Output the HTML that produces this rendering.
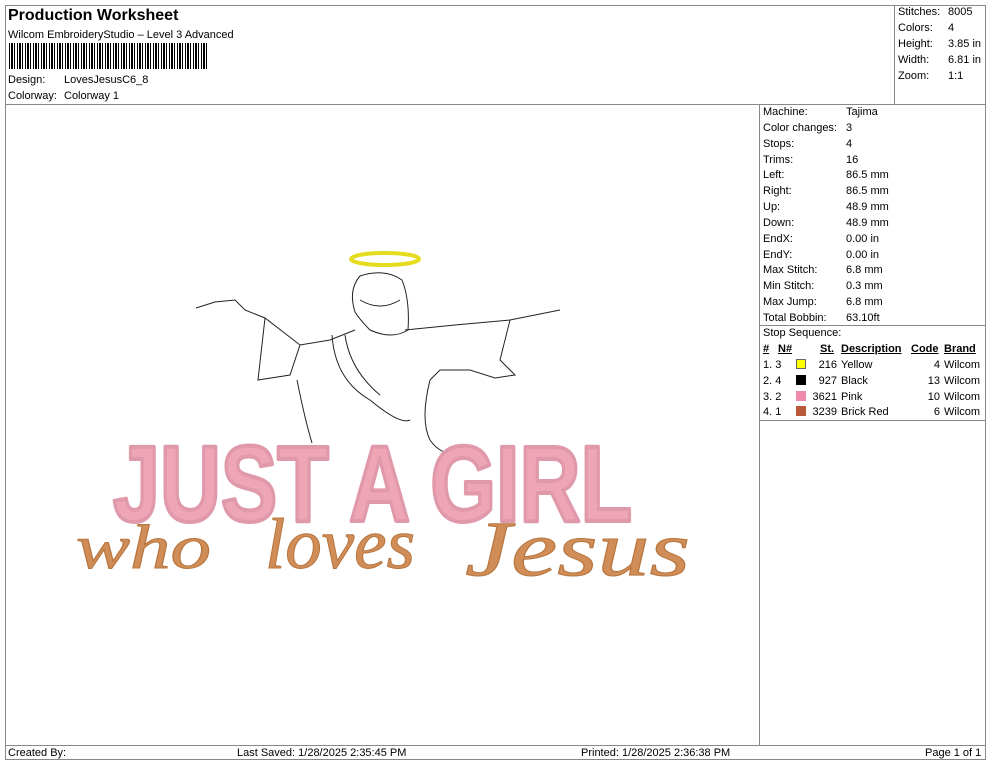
<!DOCTYPE html>
<html><head><meta charset="utf-8"><style>
*{margin:0;padding:0;box-sizing:border-box}
body{width:990px;height:762px;background:#fff;font-family:"Liberation Sans",Arial,sans-serif;font-size:11px;color:#000;position:relative;overflow:hidden}
.a{position:absolute;white-space:nowrap;line-height:13px;margin-top:1px}
.l{position:absolute;background:#888}
.bar{position:absolute;left:9px;top:43px;width:199px;height:26px;background:repeating-linear-gradient(90deg,#000 0 1px,#fff 1px 2px,#000 2px 4px,#fff 4px 5px,#000 5px 6px,#fff 6px 8px)}
</style></head><body>
<div class="l" style="left:5px;top:5px;width:980px;height:1px"></div>
<div class="l" style="left:5px;top:5px;width:1px;height:755px"></div>
<div class="l" style="left:985px;top:5px;width:1px;height:755px"></div>
<div class="l" style="left:5px;top:104px;width:980px;height:1px"></div>
<div class="l" style="left:894px;top:5px;width:1px;height:99px"></div>
<div class="l" style="left:759px;top:104px;width:1px;height:641px"></div>
<div class="l" style="left:759px;top:325px;width:226px;height:1px"></div>
<div class="l" style="left:759px;top:420px;width:226px;height:1px"></div>
<div class="l" style="left:5px;top:745px;width:980px;height:1px"></div>
<div class="l" style="left:5px;top:759px;width:980px;height:1px"></div>

<div class="a" style="left:8px;top:6px;font-size:16px;font-weight:bold;line-height:18px">Production Worksheet</div>
<div class="a" style="left:8px;top:28px">Wilcom EmbroideryStudio – Level 3 Advanced</div>
<div class="bar"></div>
<div class="a" style="left:8px;top:73px">Design:</div><div class="a" style="left:64px;top:73px">LovesJesusC6_8</div>
<div class="a" style="left:8px;top:89px">Colorway:</div><div class="a" style="left:64px;top:89px">Colorway 1</div>

<div class="a" style="left:898px;top:5px">Stitches:</div><div class="a" style="left:948px;top:5px">8005</div>
<div class="a" style="left:898px;top:21px">Colors:</div><div class="a" style="left:948px;top:21px">4</div>
<div class="a" style="left:898px;top:37px">Height:</div><div class="a" style="left:948px;top:37px">3.85 in</div>
<div class="a" style="left:898px;top:53px">Width:</div><div class="a" style="left:948px;top:53px">6.81 in</div>
<div class="a" style="left:898px;top:69px">Zoom:</div><div class="a" style="left:948px;top:69px">1:1</div>

<div class="a" style="left:763px;top:105px">Machine:</div><div class="a" style="left:846px;top:105px">Tajima</div>
<div class="a" style="left:763px;top:121px">Color changes:</div><div class="a" style="left:846px;top:121px">3</div>
<div class="a" style="left:763px;top:137px">Stops:</div><div class="a" style="left:846px;top:137px">4</div>
<div class="a" style="left:763px;top:153px">Trims:</div><div class="a" style="left:846px;top:153px">16</div>
<div class="a" style="left:763px;top:168px">Left:</div><div class="a" style="left:846px;top:168px">86.5 mm</div>
<div class="a" style="left:763px;top:184px">Right:</div><div class="a" style="left:846px;top:184px">86.5 mm</div>
<div class="a" style="left:763px;top:200px">Up:</div><div class="a" style="left:846px;top:200px">48.9 mm</div>
<div class="a" style="left:763px;top:216px">Down:</div><div class="a" style="left:846px;top:216px">48.9 mm</div>
<div class="a" style="left:763px;top:232px">EndX:</div><div class="a" style="left:846px;top:232px">0.00 in</div>
<div class="a" style="left:763px;top:248px">EndY:</div><div class="a" style="left:846px;top:248px">0.00 in</div>
<div class="a" style="left:763px;top:263px">Max Stitch:</div><div class="a" style="left:846px;top:263px">6.8 mm</div>
<div class="a" style="left:763px;top:279px">Min Stitch:</div><div class="a" style="left:846px;top:279px">0.3 mm</div>
<div class="a" style="left:763px;top:295px">Max Jump:</div><div class="a" style="left:846px;top:295px">6.8 mm</div>
<div class="a" style="left:763px;top:311px">Total Bobbin:</div><div class="a" style="left:846px;top:311px">63.10ft</div>
<div class="a" style="left:763px;top:326px">Stop Sequence:</div>
<div class="a" style="left:763px;top:342px;font-weight:bold;text-decoration:underline">#</div>
<div class="a" style="left:778px;top:342px;font-weight:bold;text-decoration:underline">N#</div>
<div class="a" style="left:820px;top:342px;font-weight:bold;text-decoration:underline">St.</div>
<div class="a" style="left:841px;top:342px;font-weight:bold;text-decoration:underline">Description</div>
<div class="a" style="left:911px;top:342px;font-weight:bold;text-decoration:underline">Code</div>
<div class="a" style="left:944px;top:342px;font-weight:bold;text-decoration:underline">Brand</div>

<div class="a" style="left:763px;top:358px">1. 3</div><div style="position:absolute;left:796px;top:359px;width:10px;height:10px;background:#ffff00;border:1px solid #666"></div><div class="a" style="left:808px;top:358px;width:29px;text-align:right">216</div><div class="a" style="left:841px;top:358px">Yellow</div><div class="a" style="left:911px;top:358px;width:29px;text-align:right">4</div><div class="a" style="left:944px;top:358px">Wilcom</div>
<div class="a" style="left:763px;top:374px">2. 4</div><div style="position:absolute;left:796px;top:375px;width:10px;height:10px;background:#000"></div><div class="a" style="left:808px;top:374px;width:29px;text-align:right">927</div><div class="a" style="left:841px;top:374px">Black</div><div class="a" style="left:911px;top:374px;width:29px;text-align:right">13</div><div class="a" style="left:944px;top:374px">Wilcom</div>
<div class="a" style="left:763px;top:390px">3. 2</div><div style="position:absolute;left:796px;top:391px;width:10px;height:10px;background:#f08cab"></div><div class="a" style="left:808px;top:390px;width:29px;text-align:right">3621</div><div class="a" style="left:841px;top:390px">Pink</div><div class="a" style="left:911px;top:390px;width:29px;text-align:right">10</div><div class="a" style="left:944px;top:390px">Wilcom</div>
<div class="a" style="left:763px;top:405px">4. 1</div><div style="position:absolute;left:796px;top:406px;width:10px;height:10px;background:#b9593a"></div><div class="a" style="left:808px;top:405px;width:29px;text-align:right">3239</div><div class="a" style="left:841px;top:405px">Brick Red</div><div class="a" style="left:911px;top:405px;width:29px;text-align:right">6</div><div class="a" style="left:944px;top:405px">Wilcom</div>

<div class="a" style="left:8px;top:746px">Created By:</div>
<div class="a" style="left:237px;top:746px">Last Saved: 1/28/2025 2:35:45 PM</div>
<div class="a" style="left:581px;top:746px">Printed: 1/28/2025 2:36:38 PM</div>
<div class="a" style="left:925px;top:746px">Page 1 of 1</div>

<svg style="position:absolute;left:0;top:0" width="990" height="762">
<ellipse cx="385" cy="259" rx="34" ry="6" fill="none" stroke="#e6dc1e" stroke-width="4"/>
<g fill="none" stroke="#222" stroke-width="1">
<path d="M355 312 Q348 290 360 276 Q385 268 402 280 Q410 300 408 330 Q392 340 370 330 Q360 320 355 312"/>
<path d="M360 300 Q380 312 400 300"/>
<path d="M196 308 L215 302 L235 300 L245 310 L265 318 L300 345 L330 340 L355 330"/>
<path d="M265 318 L258 380 L290 375 L300 345"/>
<path d="M405 330 L455 325 L510 320 L535 315 L560 310"/>
<path d="M510 320 L500 360 L515 375 L495 378 L470 370 L440 370 L430 380"/>
<path d="M332 335 Q335 380 370 400 Q400 425 410 420"/>
<path d="M345 335 Q350 370 380 395"/>
<path d="M430 380 Q420 420 430 440 Q440 455 460 455"/>
<path d="M297 380 Q305 420 312 443"/>
</g>
<text x="113" y="521" font-family="Liberation Sans" font-weight="bold" font-size="108" fill="#eea5b5" stroke="#e099aa" stroke-width="4" stroke-linejoin="round" textLength="519" lengthAdjust="spacingAndGlyphs">JUST A GIRL</text>
<g font-family="Liberation Serif" font-style="italic" fill="#d08d57" stroke="#b8763f" stroke-width="1">
<text x="76" y="568" font-size="62" textLength="135" lengthAdjust="spacingAndGlyphs">who</text>
<text x="265" y="568" font-size="72" textLength="150" lengthAdjust="spacingAndGlyphs">loves</text>
<text x="465" y="575" font-size="78" textLength="225" lengthAdjust="spacingAndGlyphs">Jesus</text>
</g>
</svg>
</body></html>
